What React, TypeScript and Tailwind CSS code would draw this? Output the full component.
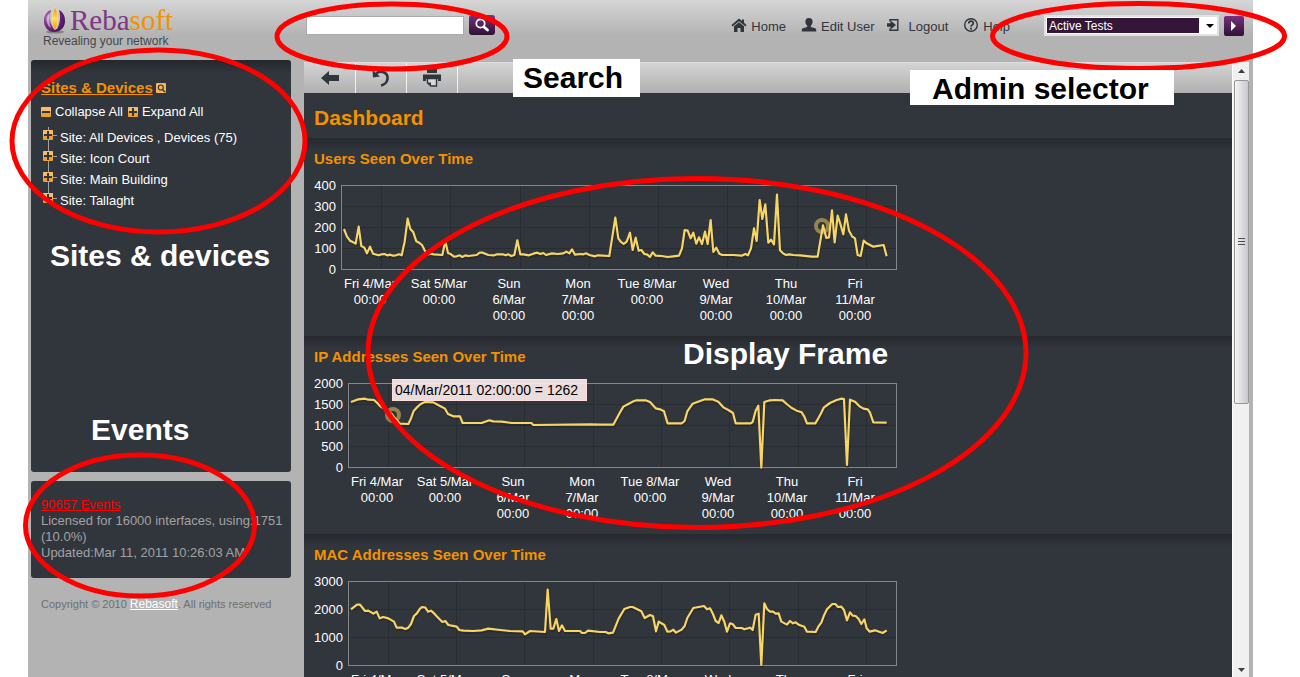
import React from "react";

type Chart = {
  title: string;
  yLabels: string[];
  plotLeft: number;
  grid: number[];
  points: string;
  originY: number;
  marker?: [number, number];
  tooltip?: string;
};

const days: string[][] = [
  ["Fri 4/Mar", "00:00"],
  ["Sat 5/Mar", "00:00"],
  ["Sun", "6/Mar", "00:00"],
  ["Mon", "7/Mar", "00:00"],
  ["Tue 8/Mar", "00:00"],
  ["Wed", "9/Mar", "00:00"],
  ["Thu", "10/Mar", "00:00"],
  ["Fri", "11/Mar", "00:00"],
];

const wideGrid = [74, 142, 210, 279, 347, 415, 484, 552];

// Series points are stored in thirds of a pixel and scaled down when drawn.
const charts: Chart[] = [
  {
    title: "Users Seen Over Time",
    yLabels: ["400", "300", "200", "100", "0"],
    plotLeft: 27,
    grid: [67, 136, 206, 275, 344, 413, 483, 552],
    originY: 99,
    marker: [508, 48],
    points:
      "132,252 141,275 150,287 158,291 167,296 176,245 184,303 193,308 201,325 210,305 219,326 236,331 245,328 253,327 262,331 271,329 279,332 288,331 297,328 305,331 314,290 323,221 331,252 340,262 349,289 357,293 366,300 375,318 384,328 392,326 401,328 427,330 436,288 444,324 453,328 462,335 470,334 479,331 487,336 496,331 505,333 530,330 539,323 548,323 565,330 583,331 591,328 608,328 617,331 625,328 634,333 643,330 652,286 661,328 670,328 687,331 700,326 712,323 721,327 730,324 738,330 756,325 773,327 790,325 799,320 808,325 816,313 825,329 842,327 850,328 859,325 868,330 885,334 894,331 928,333 946,218 955,280 962,290 971,297 980,290 990,263 998,315 1007,278 1016,317 1024,315 1033,327 1042,329 1050,336 1058,322 1067,332 1085,333 1103,336 1120,334 1137,332 1146,310 1154,255 1163,257 1172,280 1180,263 1189,296 1197,277 1206,297 1215,260 1223,297 1232,225 1240,321 1249,308 1258,326 1267,330 1300,330 1325,332 1336,327 1344,331 1353,310 1362,250 1370,288 1379,165 1387,222 1396,178 1405,293 1413,284 1422,298 1431,149 1440,316 1449,325 1458,330 1467,328 1480,330 1500,331 1535,335 1553,335 1569,241 1579,279 1587,277 1596,196 1604,292 1613,212 1622,240 1630,268 1638,208 1647,257 1657,275 1665,280 1673,330 1682,333 1691,287 1700,295 1720,305 1751,300 1760,334",
  },
  {
    title: "IP Addresses Seen Over Time",
    yLabels: ["2000", "1500", "1000", "500", "0"],
    plotLeft: 34,
    grid: wideGrid,
    originY: 108,
    marker: [79, 39],
    tooltip: "04/Mar/2011 02:00:00 = 1262",
    points:
      "153,186 175,178 195,176 205,179 222,180 233,190 240,198 255,208 275,222 285,235 300,251 325,252 332,238 341,213 350,203 362,192 375,186 400,187 420,198 435,206 444,222 460,229 480,229 488,249 545,249 568,241 580,244 605,245 635,249 694,249 700,255 870,253 900,254 940,254 959,219 970,200 985,192 1000,184 1010,181 1037,181 1050,186 1067,205 1080,208 1092,214 1103,250 1145,250 1154,243 1162,214 1178,191 1200,183 1215,178 1237,178 1255,185 1270,202 1285,210 1299,219 1307,250 1352,250 1358,246 1367,212 1375,197 1384,383 1393,186 1410,181 1425,180 1448,181 1460,192 1475,204 1490,212 1505,217 1513,230 1521,250 1546,250 1555,235 1562,222 1572,202 1590,189 1610,180 1625,176 1632,177 1641,375 1650,179 1665,185 1680,200 1690,206 1703,208 1710,218 1720,247 1760,248",
  },
  {
    title: "MAC Addresses Seen Over Time",
    yLabels: ["3000", "2000", "1000", "0"],
    plotLeft: 34,
    grid: wideGrid,
    originY: 117,
    points:
      "153,223 171,209 180,209 195,228 205,227 220,236 230,230 239,250 250,246 265,250 282,260 290,278 307,278 316,282 325,278 333,267 342,243 350,236 360,221 367,216 376,218 384,230 393,227 402,235 410,244 427,261 436,258 445,270 470,275 478,285 490,287 520,288 545,286 565,281 600,285 630,288 668,289 675,298 690,288 735,291 743,164 752,281 760,281 769,252 777,288 786,271 795,288 840,288 846,294 855,294 864,287 900,291 917,291 925,295 939,293 956,251 973,222 990,216 998,216 1024,229 1034,249 1050,240 1059,244 1068,289 1076,260 1093,270 1102,290 1112,289 1120,284 1128,293 1145,284 1154,273 1162,249 1180,219 1212,213 1221,223 1230,220 1239,237 1247,258 1256,264 1264,241 1273,260 1281,290 1290,265 1299,268 1307,279 1325,279 1333,283 1350,278 1358,285 1367,239 1376,236 1384,390 1393,205 1401,222 1410,230 1419,230 1427,236 1436,235 1444,260 1461,269 1470,258 1479,265 1487,262 1496,269 1513,275 1521,290 1547,291 1555,275 1564,263 1573,239 1581,223 1597,207 1606,207 1614,216 1624,215 1632,225 1641,256 1650,232 1658,242 1667,243 1676,252 1684,267 1693,253 1700,280 1709,290 1725,286 1748,294 1760,286",
  },
];

function ChartSection({ chart }: { chart: Chart }) {
  const { plotLeft, yLabels } = chart;
  const top = 7;
  const height = 84;
  const step = height / (yLabels.length - 1);
  const series = (
    <polyline points={chart.points} fill="none" strokeLinejoin="round" />
  );
  return (
    <section className="h-[198px] shrink-0 bg-linear-to-b from-[#26292d] to-[#31353c] to-[12px] px-2.5 pt-3">
      <h2 className="h-7 text-[15px] leading-[18px] font-bold text-[#f39200]">{chart.title}</h2>
      <div className="relative">
        <svg width="600" height="152" className="block overflow-visible" role="img" aria-label={chart.title}>
          <g stroke="#292c30" strokeWidth="1">
            {chart.grid.map((x) => (
              <line key={x} x1={x + 0.5} x2={x + 0.5} y1={top} y2={top + height} />
            ))}
            {yLabels.slice(1, -1).map((l, i) => (
              <line key={l} x1={plotLeft} x2="583" y1={Math.round(top + (i + 1) * step) + 0.5} y2={Math.round(top + (i + 1) * step) + 0.5} />
            ))}
          </g>
          <rect x={plotLeft + 0.5} y={top + 0.5} width={583 - plotLeft - 1} height={height} fill="none" stroke="#85868a" />
          <g transform={`scale(0.33333) translate(-42 ${-chart.originY})`}>
            <g stroke="#1d2024" strokeOpacity="0.4" strokeWidth="8" transform="translate(2 5)">{series}</g>
            <g stroke="#f8d664" strokeWidth="6.5">{series}</g>
          </g>
          {chart.marker && (
            <circle cx={chart.marker[0]} cy={chart.marker[1]} r="6" fill="none" stroke="#f8d664" strokeOpacity="0.5" strokeWidth="4" />
          )}
          <g fill="#ffffff" fontSize="13">
            {yLabels.map((l, i) => (
              <text key={l} x={plotLeft - 5} y={Math.round(top + i * step) + 5} textAnchor="end">{l}</text>
            ))}
            {days.map((lines, i) =>
              lines.map((l, j) => (
                <text key={`${i}-${j}`} x={chart.grid[i] - 11} y={110 + j * 16} textAnchor="middle">{l}</text>
              )),
            )}
          </g>
        </svg>
        {chart.tooltip && (
          <div className="absolute top-[3px] left-[78px] w-[195px] border border-[#ffdddd] bg-[#ffeeee]/90 px-0.5 text-[14px] leading-5 whitespace-nowrap text-black">
            {chart.tooltip}
          </div>
        )}
      </div>
    </section>
  );
}

function BoxIcon({ plus }: { plus?: boolean }) {
  return (
    <svg width="10" height="10" viewBox="0 0 10 10" className="shrink-0">
      <rect width="10" height="10" rx="1" fill="#f0a030" />
      <rect width="10" height="5" rx="1" fill="#f8bd6a" />
      <path d={plus ? "M1 5h8M5 1v8" : "M1 5h8"} stroke="#31353c" strokeWidth="2" />
    </svg>
  );
}

function NavLink({ label, className, children }: { label: string; className: string; children: React.ReactNode }) {
  return (
    <a href="#" className={`flex items-start ${className}`}>
      <svg width="16" height="16" viewBox="0 0 16 16" fill="#31353c" className="shrink-0">
        {children}
      </svg>
      {label}
    </a>
  );
}

function ToolButton({ label, children }: { label: string; children: React.ReactNode }) {
  return (
    <button aria-label={label} className="flex w-[51px] items-center justify-center border-r border-white/80">
      <svg width="20" height="20" viewBox="0 0 20 20" fill="#31353c">
        {children}
      </svg>
    </button>
  );
}

function Logo() {
  return (
    <a href="#" aria-label="Rebasoft" className="block w-[145px] pt-[5px] pl-[15px]">
      <span className="flex h-[29px] items-start gap-[3px]">
        <svg width="24" height="29" viewBox="0 0 24 29" className="shrink-0">
          <defs>
            <radialGradient id="orb" cx="0.3" cy="0.35" r="0.8">
              <stop offset="0" stopColor="#c9a3d6" />
              <stop offset="0.45" stopColor="#7b2d86" />
              <stop offset="1" stopColor="#3d1150" />
            </radialGradient>
            <linearGradient id="flame" x1="0" y1="0" x2="0" y2="1">
              <stop offset="0" stopColor="#f08a00" />
              <stop offset="0.5" stopColor="#ffe14a" />
              <stop offset="1" stopColor="#f39200" />
            </linearGradient>
          </defs>
          <ellipse cx="12" cy="27" rx="9" ry="1.6" fill="#6d6d6d" opacity="0.7" />
          <path d="M8 5C3 7 1 11 1 16c0 6 4 11 10 11 7 0 11-5 11-11 0-5-2-9-6-11 2 7 1 14-2 19h-3C7 19 6 12 8 5z" fill="url(#orb)" />
          <path d="M7 8C4 10 3 13 4 17c.5 3 2 5 4 6-2-5-3-10-1-15z" fill="#e9d9ee" opacity="0.6" />
          <path d="M12 2c2.500 4 3 8 3 12 0 5-1.500 9-3 11-1.500-2-3-6-3-11 0-5 1.500-8 3-12z" fill="url(#flame)" stroke="#ffffff" strokeOpacity="0.5" strokeWidth="0.7" />
        </svg>
        <span className="font-['Liberation_Serif',serif] text-[29px] leading-[30px] text-[#803587]">
          Reba<span className="text-[#f39200]">soft</span>
        </span>
      </span>
      <span className="block text-[12px] leading-[14px] whitespace-nowrap text-[#45464a]">
        Revealing your network
      </span>
    </a>
  );
}

function Header() {
  return (
    <header className="flex h-[60px] shrink-0 items-start bg-linear-to-b from-[#d6d6d6] via-[#b3b3b3] via-[36px] to-[#b3b3b3] pr-[9px]">
      <Logo />
      <form className="ml-[133px] flex items-center gap-[5px] pt-[15px]">
        <input aria-label="Search" className="h-[19px] w-[158px] border border-[#aaaaaa] bg-white px-1 text-[13px] outline-none" />
        <button type="button" aria-label="Run search" className="flex h-5 w-[26px] items-center justify-center rounded-[3px] bg-linear-to-b from-[#793080] to-[#2e1233]">
          <svg width="16" height="16" viewBox="0 0 16 16" fill="none" stroke="#ffffff">
            <circle cx="6.5" cy="6.5" r="4.2" strokeWidth="1.800" />
            <path d="M10 10l3.500 3" strokeWidth="2.800" strokeLinecap="round" />
          </svg>
        </button>
      </form>
      <nav className="ml-auto flex pt-[18px] text-[13px] leading-[18px] text-[#31353c]">
        <NavLink label="Home" className="mr-[15px] gap-1">
          <path d="M8 .5L.5 7l1 1.500L8 3.200l6.500 5.300 1-1.500-2.500-2.200V1.500h-2v1.600z" />
          <path d="M3 8.300L8 4.300l5 4V14H9.500v-4h-3v4H3z" />
        </NavLink>
        <NavLink label="Edit User" className="mr-3 gap-1">
          <path d="M8 0C5.200 0 4.200 1.800 4.400 4c.2 1.800.9 3 1.800 3.700V9L2 10.200C1 10.500.8 11 .8 12v1.500h14.400V12c0-1-.2-1.500-1.200-1.800L9.800 9V7.700c.9-.7 1.600-1.900 1.800-3.700C11.800 1.800 10.800 0 8 0z" />
        </NavLink>
        <NavLink label="Logout" className="mr-[15px] gap-1.5">
          <path d="M4 3.500V1.700h7.800v10.600H4v-1.800" fill="none" stroke="#31353c" strokeWidth="1.400" />
          <path d="M1 5.200h3.500V2.500L10 7l-5.500 4.500V8.800H1z" />
        </NavLink>
        <NavLink label="Help" className="gap-1">
          <circle cx="8" cy="7" r="6.300" fill="none" stroke="#31353c" strokeWidth="1.400" />
          <path d="M5.700 5.500c0-3.200 4.700-2.900 4.600-.2C10.300 6.900 8 6.800 8 8.700" fill="none" stroke="#31353c" strokeWidth="1.700" />
          <rect x="7.100" y="9.700" width="1.800" height="1.800" />
        </NavLink>
      </nav>
      <form className="ml-[34px] flex items-center gap-[5px] pt-[15px]">
        <label className="relative block h-[21px] w-[175px] border-2 border-[#e2e2e4] bg-white p-px">
          <select aria-label="Admin selector" className="block h-[15px] w-[152px] appearance-none bg-[#341638] px-0.5 pt-px text-[12px] leading-[14px] text-white outline-none">
            <option>Active Tests</option>
          </select>
          <svg width="8" height="4" viewBox="0 0 8 4" className="pointer-events-none absolute top-[7px] right-[3px]">
            <path d="M0 0h8L4 4z" fill="#000000" />
          </svg>
        </label>
        <button type="button" aria-label="Go" className="flex h-5 w-5 items-center justify-center rounded-[2px] bg-linear-to-b from-[#793080] to-[#2e1233]">
          <svg width="6" height="10" viewBox="0 0 6 10"><path d="M0 0l5 5-5 5z" fill="#ffffff" /></svg>
        </button>
      </form>
    </header>
  );
}

const sites = ["All Devices , Devices (75)", "Icon Court", "Main Building", "Tallaght"];

function Sidebar() {
  return (
    <aside className="w-[260px] shrink-0 text-[13px] text-white">
      <section className="h-[412px] rounded-[3px] bg-linear-to-b from-[#24272b] to-[#31353c] to-[12px] px-2.5 pt-[19px]">
        <div className="flex items-center gap-[3px]">
          <a href="#" className="text-[15px] leading-[18px] font-bold text-[#f39200] underline">Sites &amp; Devices</a>
          <svg width="10" height="10" viewBox="0 0 10 10">
            <rect width="10" height="10" rx="1" fill="#f8b45a" />
            <circle cx="4.800" cy="4.500" r="2.500" fill="none" stroke="#31353c" strokeWidth="1.200" />
            <path d="M6.500 6.500L9 9" stroke="#31353c" strokeWidth="1.500" />
          </svg>
        </div>
        <div className="flex gap-[5px] pt-1.5 leading-[18px]">
          <a href="#" className="flex items-center gap-1"><BoxIcon />Collapse All</a>
          <a href="#" className="flex items-center gap-1"><BoxIcon plus />Expand All</a>
        </div>
        <ul className="pt-1.5">
          {sites.map((site, i) => (
            <li key={site} className="flex h-[21px] items-center">
              <svg width="19" height="21" viewBox="0 0 19 21" className="shrink-0">
                <path d={i === sites.length - 1 ? "M7.500 0v9M7 8.500h9" : "M7.500 0v21M7 8.500h9"} stroke="#a0a1a4" fill="none" />
                <rect x="2" y="3" width="10" height="10" rx="1" fill="#f0a030" />
                <rect x="2" y="3" width="10" height="5" rx="1" fill="#f8bd6a" />
                <path d="M3 8h8M7 4v8" stroke="#31353c" strokeWidth="2" />
              </svg>
              <a href="#" className="leading-[21px]">Site: {site}</a>
            </li>
          ))}
        </ul>
      </section>
      <section className="mt-[9px] h-[97px] rounded-[3px] bg-[#31353c] pt-4 pr-2 pl-2.5 leading-4 text-[#a3a3a3]">
        <a href="#" className="text-[#ff0000] underline">90657 Events</a>
        <p>
          <span className="whitespace-nowrap">Licensed for 16000 interfaces, using:1751</span> (10.0%)
        </p>
        <p>Updated:Mar 11, 2011 10:26:03 AM</p>
      </section>
      <footer className="px-2.5 pt-[18px] text-[11px] leading-4 text-[#6b7073]">
        Copyright © 2010 <a href="#" className="text-[12px] text-white underline">Rebasoft</a>. All rights reserved
      </footer>
    </aside>
  );
}

function Scrollbar() {
  return (
    <div className="mt-0.5 mr-1 flex w-[17px] shrink-0 flex-col items-center border-l border-white bg-[#f0f0f0]">
      <svg width="7" height="18" viewBox="0 0 7 18" className="shrink-0"><path d="M0 11l3.500-4L7 11z" fill="#404040" /></svg>
      <div className="flex h-[324px] w-[15px] items-center justify-center rounded-[2px] border border-[#979797] bg-linear-to-r from-[#f5f5f5] to-[#c8c8ce]">
        <svg width="7" height="8" viewBox="0 0 7 8"><path d="M0 .5h7M0 3.500h7M0 6.500h7" stroke="#505050" /></svg>
      </div>
      <svg width="7" height="16" viewBox="0 0 7 16" className="mt-auto shrink-0"><path d="M0 7h7l-3.500 4z" fill="#404040" /></svg>
    </div>
  );
}

function Annotations() {
  const label = "pointer-events-none absolute text-[30px] leading-[34px] font-bold whitespace-nowrap";
  return (
    <>
      <svg width="1300" height="677" className="pointer-events-none absolute top-0 left-0" fill="none" stroke="#ff0000" strokeWidth="5">
        <ellipse cx="392" cy="36.500" rx="115" ry="32.500" />
        <ellipse cx="1138.500" cy="36" rx="146" ry="32.500" />
        <ellipse cx="158.500" cy="141" rx="146.500" ry="91" />
        <ellipse cx="697" cy="353" rx="329" ry="174.500" />
        <ellipse cx="140" cy="525.500" rx="114.500" ry="70.500" />
      </svg>
      <div className={`${label} top-[59px] left-[513px] bg-white pt-0.5 pr-[17px] pb-0.5 pl-2.5 text-black`}>Search</div>
      <div className={`${label} top-[70px] left-[910px] bg-white pt-[3px] pr-[25px] pl-[22px] text-black`}>
        <span className="block leading-8">Admin selector</span>
      </div>
      <div className={`${label} top-[239px] left-[50px] text-white`}>Sites &amp; devices</div>
      <div className={`${label} top-[413px] left-[91px] text-white`}>Events</div>
      <div className={`${label} top-[337px] left-[683px] text-white`}>Display Frame</div>
    </>
  );
}

export default function App() {
  return (
    <div className="relative h-screen overflow-hidden bg-white pr-[47px] pl-7 font-['Liberation_Sans',Arial,sans-serif]">
      <div className="flex h-full flex-col bg-[#b3b3b3]">
        <Header />
        <div className="flex min-h-0 flex-1 pl-[3px]">
          <Sidebar />
          <main className="mt-0.5 ml-[13px] flex min-w-0 flex-1 flex-col overflow-hidden bg-[#31353c]">
            <div className="flex h-[31px] shrink-0 border-t border-[#dddddd] bg-linear-to-b from-[#d4d4d4] to-[#b0b0b0] pl-px">
              <ToolButton label="Back">
                <path d="M1 10l8-7v4h10v6H9v4z" />
              </ToolButton>
              <ToolButton label="Refresh">
                <path d="M4.500 6.500C9 1 17.500 4.500 16.500 11c-.5 3.500-3.500 6-6.500 6.500" fill="none" stroke="#31353c" strokeWidth="2.600" />
                <path d="M1.500 2l.5 7.500 7-1z" />
              </ToolButton>
              <ToolButton label="Print">
                <path d="M5 1h10v4H5zM1 6.500h18V13h-3v-2H4v2H1z" />
                <path d="M5.500 10.500h9V18H9l-3.500-3z" fill="#d8d8d8" stroke="#31353c" strokeWidth="1.400" />
                <path d="M5 14.500h4V18z" />
              </ToolButton>
            </div>
            <h1 className="h-[45px] shrink-0 px-2.5 text-[21px] leading-[50px] font-bold text-[#f39200]">Dashboard</h1>
            {charts.map((chart) => (
              <ChartSection key={chart.title} chart={chart} />
            ))}
          </main>
          <Scrollbar />
        </div>
      </div>
      <Annotations />
    </div>
  );
}
